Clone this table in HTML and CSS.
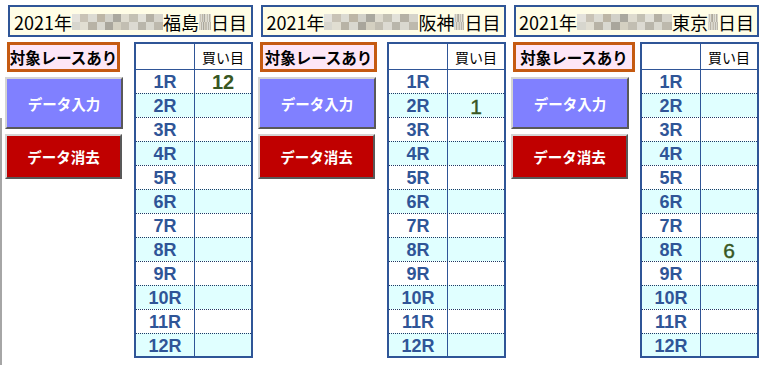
FILE: index.html
```html
<!DOCTYPE html>
<html lang="ja">
<head>
<meta charset="utf-8">
<title>買い目</title>
<link rel="stylesheet" href="styles.css">
</head>
<body>
<div class="panels">
  <section class="panel">
    <div class="title"><span>2021年</span><span class="blur w91"></span><span>福島</span><span class="blur w12"></span><span>日目</span></div>
    <div class="main">
      <div class="side">
        <div class="tag t1">対象レースあり</div>
        <div class="btn btn-in">データ入力</div>
        <div class="btn btn-del">データ消去</div>
      </div>
      <div class="tbl">
        <div class="row head"><div class="c"></div><div class="c hd">買い目</div></div>
        <div class="row first"><div class="c r">1R</div><div class="c v bold">12</div></div>
        <div class="row even"><div class="c r">2R</div><div class="c v"></div></div>
        <div class="row"><div class="c r">3R</div><div class="c v"></div></div>
        <div class="row even"><div class="c r">4R</div><div class="c v"></div></div>
        <div class="row"><div class="c r">5R</div><div class="c v"></div></div>
        <div class="row even"><div class="c r">6R</div><div class="c v"></div></div>
        <div class="row"><div class="c r">7R</div><div class="c v"></div></div>
        <div class="row even"><div class="c r">8R</div><div class="c v"></div></div>
        <div class="row"><div class="c r">9R</div><div class="c v"></div></div>
        <div class="row even"><div class="c r">10R</div><div class="c v"></div></div>
        <div class="row"><div class="c r">11R</div><div class="c v"></div></div>
        <div class="row even last"><div class="c r">12R</div><div class="c v"></div></div>
      </div>
    </div>
  </section>

  <section class="panel">
    <div class="title"><span>2021年</span><span class="blur w94"></span><span>阪神</span><span class="blur w10"></span><span>日目</span></div>
    <div class="main">
      <div class="side">
        <div class="tag t2">対象レースあり</div>
        <div class="btn btn-in">データ入力</div>
        <div class="btn btn-del">データ消去</div>
      </div>
      <div class="tbl">
        <div class="row head"><div class="c"></div><div class="c hd">買い目</div></div>
        <div class="row first"><div class="c r">1R</div><div class="c v"></div></div>
        <div class="row even"><div class="c r">2R</div><div class="c v">1</div></div>
        <div class="row"><div class="c r">3R</div><div class="c v"></div></div>
        <div class="row even"><div class="c r">4R</div><div class="c v"></div></div>
        <div class="row"><div class="c r">5R</div><div class="c v"></div></div>
        <div class="row even"><div class="c r">6R</div><div class="c v"></div></div>
        <div class="row"><div class="c r">7R</div><div class="c v"></div></div>
        <div class="row even"><div class="c r">8R</div><div class="c v"></div></div>
        <div class="row"><div class="c r">9R</div><div class="c v"></div></div>
        <div class="row even"><div class="c r">10R</div><div class="c v"></div></div>
        <div class="row"><div class="c r">11R</div><div class="c v"></div></div>
        <div class="row even last"><div class="c r">12R</div><div class="c v"></div></div>
      </div>
    </div>
  </section>

  <section class="panel">
    <div class="title"><span>2021年</span><span class="blur w95"></span><span>東京</span><span class="blur w10"></span><span>日目</span></div>
    <div class="main">
      <div class="side">
        <div class="tag t3">対象レースあり</div>
        <div class="btn btn-in">データ入力</div>
        <div class="btn btn-del">データ消去</div>
      </div>
      <div class="tbl">
        <div class="row head"><div class="c"></div><div class="c hd">買い目</div></div>
        <div class="row first"><div class="c r">1R</div><div class="c v"></div></div>
        <div class="row even"><div class="c r">2R</div><div class="c v"></div></div>
        <div class="row"><div class="c r">3R</div><div class="c v"></div></div>
        <div class="row even"><div class="c r">4R</div><div class="c v"></div></div>
        <div class="row"><div class="c r">5R</div><div class="c v"></div></div>
        <div class="row even"><div class="c r">6R</div><div class="c v"></div></div>
        <div class="row"><div class="c r">7R</div><div class="c v"></div></div>
        <div class="row even"><div class="c r">8R</div><div class="c v">6</div></div>
        <div class="row"><div class="c r">9R</div><div class="c v"></div></div>
        <div class="row even"><div class="c r">10R</div><div class="c v"></div></div>
        <div class="row"><div class="c r">11R</div><div class="c v"></div></div>
        <div class="row even last"><div class="c r">12R</div><div class="c v"></div></div>
      </div>
    </div>
  </section>
</div>
</body>
</html>
```

FILE: styles.css
```css
* { box-sizing: border-box; }

html, body {
  width: 770px;
  height: 365px;
  overflow: hidden;
}

body {
  margin: 0;
  padding: 5px 0 0 8px;
  background: #ffffff;
  font-family: "Noto Sans CJK JP", "Noto Sans", sans-serif;
  color: #000;
  position: relative;
}

body::before {
  content: "";
  position: absolute;
  left: 0;
  top: 118px;
  bottom: 0;
  width: 2px;
  background: #a6a6a6;
}

.panels {
  display: flex;
  gap: 8px;
}

.panel {
  width: 245px;
  display: flex;
  flex-direction: column;
  gap: 5px;
}

.title {
  height: 32px;
  border: 2px solid #2f5597;
  background: #fffde6;
  display: flex;
  align-items: center;
  justify-content: center;
  font-size: 18px;
  line-height: 1;
  padding-top: 1px;
  white-space: nowrap;
}

.blur {
  display: inline-block;
  height: 16px;
  background:
    linear-gradient(90deg, #e4e2dc 0 9%, #c9c3b6 9% 18%, #dcdbd3 18% 27%, #bdb6a6 27% 36%, #d2d1c9 36% 45%, #aaa89f 45% 54%, #dedbcf 54% 63%, #c4c1b4 63% 72%, #e2e1d9 72% 81%, #b5b1a5 81% 90%, #d6d4cb 90% 100%) top / 100% 50% no-repeat,
    linear-gradient(90deg, #d7d6ce 0 9%, #e1ded2 9% 18%, #b8b3a6 18% 27%, #d9d8d0 27% 36%, #a9a69c 36% 45%, #d4d0c1 45% 54%, #c2beb2 54% 63%, #dcdad2 63% 72%, #b9b6ab 72% 81%, #d9d8cf 81% 90%, #bdb9ad 90% 100%) bottom / 100% 50% no-repeat;
}
.w91 { width: 91px; }
.w94 { width: 94px; }
.w95 { width: 95px; }
.w12 { width: 12px; }
.w10 { width: 10px; }

.main {
  display: flex;
  justify-content: space-between;
  align-items: flex-start;
}

.side {
  display: flex;
  flex-direction: column;
  gap: 5px;
  margin-left: -3px;
}

.tag {
  height: 30px;
  margin-left: 2px;
  border: 3px solid #c55a11;
  background: #fde6f6;
  display: flex;
  align-items: center;
  justify-content: center;
  font-size: 15.5px;
  font-weight: bold;
  white-space: nowrap;
}
.t1 { width: 113px; }
.t2 { width: 117px; }
.t3 { width: 122px; }

.btn {
  width: 118px;
  display: flex;
  align-items: center;
  justify-content: center;
  color: #ffffff;
  font-size: 14.5px;
  font-weight: bold;
  border: 2px solid;
  border-color: #d4d4d4 #595959 #595959 #d4d4d4;
}
.btn-in {
  height: 52px;
  background: #8080ff;
}
.btn-del {
  height: 45px;
  width: 117px;
  background: #c00000;
}

.tbl {
  width: 119px;
  border: 2px solid #2f5597;
  background: #ffffff;
  display: flex;
  flex-direction: column;
}

.row {
  display: grid;
  grid-template-columns: 59px 1fr;
  height: 24px;
  border-top: 1px dotted #1f3864;
}
.row.head {
  height: 26px;
  border-top: none;
  border-bottom: 1px solid #2f5597;
}
.row.first {
  height: 23px;
  border-top: none;
}
.row.last {
  height: 23px;
}
.row.even {
  background: #e0ffff;
}

.c {
  display: flex;
  align-items: center;
  justify-content: center;
  line-height: 1;
}
.row > .c:first-child {
  border-right: 1px solid #2f5597;
}

.hd {
  font-size: 14px;
  padding-top: 1px;
}

.r {
  font-family: "Liberation Sans", Arial, sans-serif;
  font-weight: bold;
  font-size: 18px;
  color: #2f5597;
  padding-top: 1px;
}

.v {
  font-family: "Liberation Sans", Arial, sans-serif;
  font-size: 21px;
  color: #385723;
  padding-top: 1px;
  -webkit-text-stroke: 0.4px #385723;
}
.v.bold {
  font-weight: bold;
  -webkit-text-stroke: 0;
  font-size: 20px;
}
```
